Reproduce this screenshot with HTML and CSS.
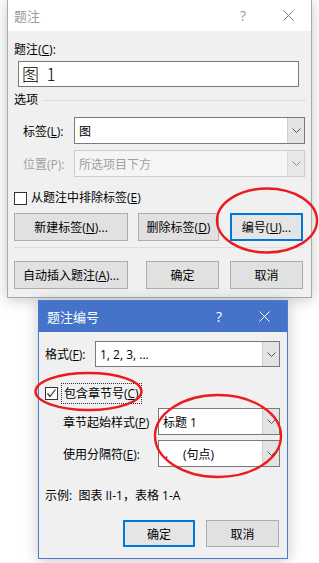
FILE: index.html
```html
<!DOCTYPE html>
<html lang="zh-CN">
<head>
  <meta charset="UTF-8" />
  <title>题注</title>
  <link rel="stylesheet" href="styles.css">
</head>
<body>

  <!-- 题注 dialog (inactive, behind) -->
  <div class="dlg dlg-main">
    <div class="titlebar">
      <span class="title">题注</span>
      <span class="tb-btn help">?</span>
      <span class="tb-btn close">
        <svg width="11" height="11" viewBox="0 0 11 11"><path d="M0.5 0.5 L10.5 10.5 M10.5 0.5 L0.5 10.5" /></svg>
      </span>
    </div>
    <div class="body">
      <div class="lbl cap-lbl">题注(<u>C</u>):</div>
      <div class="cap-input">图&nbsp;&nbsp;1</div>

      <div class="group-row"><span>选项</span><span class="rule"></span></div>

      <div class="field-row first">
        <span class="field-lbl">标签(<u>L</u>):</span>
        <div class="combo">
          <span class="combo-text">图</span>
          <span class="arrow"><svg width="9" height="5" viewBox="0 0 9 5"><polyline points="0.5,0.5 4.5,4.5 8.5,0.5" /></svg></span>
        </div>
      </div>
      <div class="field-row second disabled">
        <span class="field-lbl">位置(P):</span>
        <div class="combo">
          <span class="combo-text">所选项目下方</span>
          <span class="arrow"><svg width="9" height="5" viewBox="0 0 9 5"><polyline points="0.5,0.5 4.5,4.5 8.5,0.5" /></svg></span>
        </div>
      </div>

      <div class="check-row">
        <span class="box"></span>
        <span>从题注中排除标签(<u>E</u>)</span>
      </div>

      <div class="btn-row row-top">
        <button class="btn w114">新建标签(<u>N</u>)...</button>
        <button class="btn w81">删除标签(<u>D</u>)</button>
        <button class="btn w73 focus">编号(<u>U</u>)...</button>
      </div>
      <div class="sep"></div>
      <div class="btn-row row-bottom">
        <button class="btn w114">自动插入题注(<u>A</u>)...</button>
        <button class="btn w73 push">确定</button>
        <button class="btn w73">取消</button>
      </div>
    </div>
  </div>

  <!-- 题注编号 dialog (active, front) -->
  <div class="dlg dlg-num">
    <div class="titlebar active">
      <span class="title">题注编号</span>
      <span class="tb-btn help">?</span>
      <span class="tb-btn close">
        <svg width="11" height="11" viewBox="0 0 11 11"><path d="M0.5 0.5 L10.5 10.5 M10.5 0.5 L0.5 10.5" /></svg>
      </span>
    </div>
    <div class="body">
      <div class="field-row fmt">
        <span class="field-lbl">格式(<u>F</u>):</span>
        <div class="combo">
          <span class="combo-text">1, 2, 3, ...</span>
          <span class="arrow"><svg width="9" height="5" viewBox="0 0 9 5"><polyline points="0.5,0.5 4.5,4.5 8.5,0.5" /></svg></span>
        </div>
      </div>

      <div class="check-row chap">
        <span class="box checked">
          <svg width="11" height="11" viewBox="0 0 11 11"><polyline points="1.5,5.5 4,8.5 9.5,1.5" /></svg>
        </span>
        <span class="focus-lbl">包含章节号(<u>C</u>)</span>
      </div>

      <div class="field-row sub first-sub">
        <span class="field-lbl">章节起始样式(<u>P</u>)</span>
        <div class="combo">
          <span class="combo-text">标题 1</span>
          <span class="arrow"><svg width="9" height="5" viewBox="0 0 9 5"><polyline points="0.5,0.5 4.5,4.5 8.5,0.5" /></svg></span>
        </div>
      </div>
      <div class="field-row sub second-sub">
        <span class="field-lbl">使用分隔符(<u>E</u>):</span>
        <div class="combo">
          <span class="combo-text"><span class="dot">.</span>(句点)</span>
          <span class="arrow"><svg width="9" height="5" viewBox="0 0 9 5"><polyline points="0.5,0.5 4.5,4.5 8.5,0.5" /></svg></span>
        </div>
      </div>

      <div class="example">示例:&nbsp; 图表 II-1，表格 1-A</div>

      <div class="btn-row row-end">
        <button class="btn w72 focus">确定</button>
        <button class="btn w73">取消</button>
      </div>
    </div>
  </div>

  <!-- red annotation rings -->
  <svg class="marks" width="319" height="563" viewBox="0 0 319 563">
    <ellipse cx="267" cy="220.5" rx="50" ry="32" />
    <ellipse cx="88.5" cy="391.5" rx="53" ry="18.5" />
    <ellipse cx="218" cy="436" rx="63" ry="41" />
  </svg>

</body>
</html>
```

FILE: styles.css
```css
body {
  margin: 0;
  width: 319px;
  height: 563px;
  overflow: hidden;
  position: relative;
  background: #fff;
  font-family: "Open Sans", "Noto Sans CJK SC", sans-serif;
  font-size: 12px;
  color: #000;
}
u {
  text-decoration: underline;
  text-underline-offset: 1px;
}

/* windows */
.dlg {
  position: absolute;
  box-sizing: border-box;
  background: #f0f0f0;
  box-shadow: 0 2px 14px rgba(0, 0, 0, 0.22);
}
.dlg-main {
  left: 7px;
  top: -1px;
  width: 305px;
  height: 299px;
  border: 1px solid #aaaaaa;
}
.dlg-num {
  left: 38px;
  top: 300px;
  width: 250px;
  height: 259px;
  border: 1px solid #4a7bd2;
}

.titlebar {
  height: 31px;
  display: flex;
  align-items: center;
  background: #fff;
  color: #9a9a9a;
}
.titlebar .title {
  flex: 1;
  padding-left: 6px;
  font-size: 13px;
}
.titlebar .tb-btn {
  width: 46px;
  height: 31px;
  display: flex;
  align-items: center;
  justify-content: center;
  font-size: 14px;
}
.titlebar .close {
  width: 45px;
}
.titlebar svg path {
  stroke: #7a7a7a;
  stroke-width: 1;
  fill: none;
}
.titlebar.active {
  height: 31px;
  background: #4473c9;
  color: #fff;
}
.titlebar.active .title {
  padding-left: 8px;
}
.titlebar.active svg path {
  stroke: #fff;
}

.body {
  padding: 0 6px;
}
.dlg-num .body {
  padding: 0 7px 0 6px;
}

.lbl, .group-row, .check-row, .example {
  line-height: 16px;
  height: 16px;
}
.cap-lbl {
  margin-top: 11px;
}
.cap-input {
  box-sizing: border-box;
  margin: 3px 0 0 4px;
  width: 281px;
  height: 26px;
  border: 1px solid #7a7a7a;
  background: #fff;
  padding-left: 3px;
  font-size: 17px;
  line-height: 24px;
  font-family: "Noto Sans CJK SC", sans-serif;
  font-weight: 300;
}
.group-row {
  margin-top: 5px;
  margin-right: -1px;
  display: flex;
  align-items: center;
}
.group-row .rule {
  flex: 1;
  height: 1px;
  margin-left: 5px;
  background: #dcdcdc;
}

/* label + combo rows */
.field-row {
  display: flex;
  align-items: center;
  height: 27px;
}
.field-row.first { margin-top: 9px; }
.field-row.second { margin-top: 6px; }
.field-lbl {
  width: 51px;
  padding-left: 9px;
  flex-shrink: 0;
}
.fmt {
  margin-top: 9px;
  height: 26px;
}
.fmt .field-lbl {
  width: 50px;
  padding-left: 0;
}
.sub {
  padding-left: 18px;
}
.sub .field-lbl {
  width: 95px;
  padding-left: 0;
}
.first-sub { margin-top: 4px; }
.second-sub { margin-top: 5px; }

.combo {
  flex: 1;
  align-self: stretch;
  box-sizing: border-box;
  display: flex;
  border: 1px solid #7a7a7a;
  background: #fff;
}
.combo-text {
  flex: 1;
  padding-left: 4px;
  display: flex;
  align-items: center;
}
.combo .arrow {
  width: 16px;
  background: #e3e3e3;
  border-left: 1px solid #cfcfcf;
  display: flex;
  align-items: center;
  justify-content: center;
}
.combo .arrow polyline {
  stroke: #555;
  stroke-width: 1;
  fill: none;
}
.dot {
  width: 18px;
  padding-left: 2px;
}
.disabled {
  color: #a0a0a0;
}
.disabled .combo {
  border-color: #cccccc;
  background: #f5f5f5;
}
.disabled .combo .arrow {
  background: #e8e8e8;
  border-left-color: #dadada;
}
.disabled .combo .arrow polyline {
  stroke: #888;
}

/* checkboxes */
.check-row {
  margin-top: 13px;
  display: flex;
  align-items: center;
}
.box {
  box-sizing: border-box;
  width: 13px;
  height: 13px;
  border: 1px solid #333;
  background: #fff;
  margin-right: 4px;
  display: flex;
  align-items: center;
  justify-content: center;
}
.box polyline {
  stroke: #333;
  stroke-width: 1.2;
  fill: none;
}
.chap {
  margin-top: 16px;
  height: 21px;
}
.chap .box {
  margin-right: 3px;
}
.focus-lbl {
  padding: 0 2px;
  line-height: 19px;
  border: 1px dotted #333;
}

/* buttons */
.btn-row {
  display: flex;
}
.row-top {
  margin-top: 7px;
  height: 28px;
}
.row-bottom {
  margin-top: 13px;
  height: 28px;
}
.row-top .btn + .btn { margin-left: 10px; }
.row-top .btn.focus { margin-left: 11px; }
.row-bottom .btn.push { margin-left: 18px; }
.row-bottom .btn + .btn + .btn { margin-left: 11px; }
.row-end {
  margin-top: 16px;
  height: 27px;
  justify-content: flex-end;
  padding-right: 1px;
}
.row-end .btn + .btn { margin-left: 11px; }

.btn {
  box-sizing: border-box;
  height: 100%;
  padding: 0;
  background: #e1e1e1;
  border: 1px solid #adadad;
  font: inherit;
  color: #000;
}
.btn.focus {
  border: 2px solid #0078d7;
  background: #e5e5e5;
}
.w114 { width: 114px; }
.w81 { width: 81px; }
.w73 { width: 73px; }
.w72 { width: 72px; }

.sep {
  margin-top: 6px;
  margin-right: 1px;
  height: 1px;
  background: #dcdcdc;
}
.example {
  margin-top: 21px;
}

/* annotations */
.marks {
  position: absolute;
  left: 0;
  top: 0;
  pointer-events: none;
}
.marks ellipse {
  fill: none;
  stroke: #ea1c1f;
  stroke-width: 2.4;
}
```
